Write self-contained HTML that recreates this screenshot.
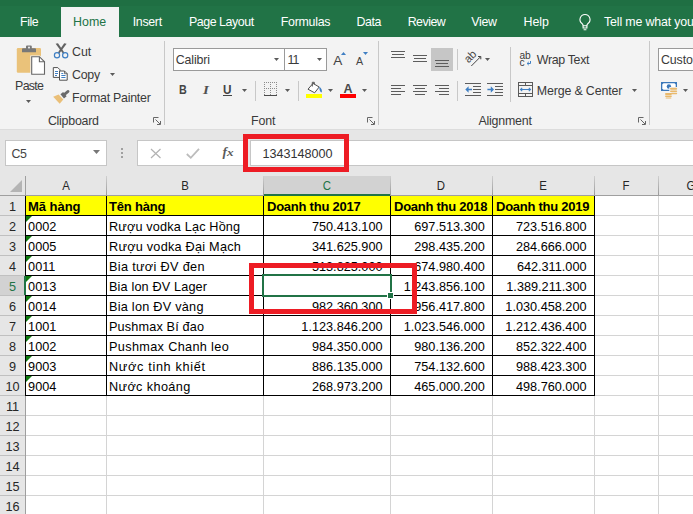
<!DOCTYPE html>
<html lang="vi"><head><meta charset="utf-8"><title>Excel</title>
<style>
html,body{margin:0;padding:0}
body{width:693px;height:514px;overflow:hidden;position:relative;background:#fff;font-family:"Liberation Sans",sans-serif;color:#000}
.a{position:absolute;white-space:nowrap}
.t{position:absolute;white-space:nowrap;font-size:11.7px;line-height:14px;color:#3a3a3a}
.c{position:absolute;white-space:nowrap;font-size:12.7px;line-height:14px;color:#000}
.b{font-weight:bold}
svg{position:absolute;overflow:visible}
</style></head><body>

<div class="a" style="left:0;top:0;width:693px;height:37px;background:#217346"></div>
<div class="a" style="left:0;top:0;width:693px;height:6px;background:#1f6f43"></div>
<div class="a" style="left:61px;top:7px;width:58px;height:30px;background:#f3f3f3"></div>
<svg id="bulb" style="left:576.5px;top:13px" width="16" height="18" viewBox="0 0 16 18"><path d="M8 1.500a5 5 0 0 0-3 9c.7.600 1.100 1.500 1.100 2.200h3.800c0-.700.400-1.600 1.100-2.200a5 5 0 0 0-3-9z" fill="none" stroke="#fff" stroke-width="1.100"/><path d="M6.100 12.700v2.300h3.800v-2.300M6.600 16.800h2.800" stroke="#fff" stroke-width="1.100" fill="none"/></svg>
<div class="a" style="left:0;top:37px;width:693px;height:92px;background:#f3f3f3"></div>
<div class="a" style="left:0;top:129px;width:693px;height:47px;background:#e6e6e6"></div>
<div class="a" style="left:0;top:129px;width:693px;height:1px;background:#dcdcdc"></div>
<div class="a" style="left:164px;top:41px;width:1px;height:84px;background:#c8c8c8"></div>
<div class="a" style="left:378px;top:41px;width:1px;height:84px;background:#c8c8c8"></div>
<div class="a" style="left:649px;top:41px;width:1px;height:84px;background:#c8c8c8"></div>
<svg id="i-paste" style="left:16px;top:43px" width="31" height="34" viewBox="16 43 31 34">
<rect x="16.800" y="48" width="24.200" height="24.800" rx="1.200" fill="#eac27a"/>
<path d="M26 48.200v-1.700q0-1 1-1h3.800q1 0 1 1v1.700h3.200q1 0 1 1v3.100H22v-3.100q0-1 1-1z" fill="#787878"/>
<rect x="28.100" y="46.700" width="1.800" height="1.700" fill="#f3f3f3"/>
<path d="M30.300 55.400H40L46 61.400v14.200H30.300z" fill="#f3f3f3"/>
<path d="M31.700 56.700H39.400L44.500 61.800V74.200H31.700z" fill="#fff" stroke="#666" stroke-width="1.100" stroke-linejoin="miter"/>
<path d="M39.400 56.700V61.800H44.500" fill="none" stroke="#666" stroke-width="1.100"/>
</svg>
<svg style="left:26px;top:100px" width="5" height="3"><path d="M0 0h5L2.5 3z" fill="#5a5a5a"/></svg>
<svg id="i-cut" style="left:53px;top:43px" width="16" height="16" viewBox="53 43 16 16">
<path d="M55.600 43.800L58 43.300L64.300 52.400L62.900 53.500z" fill="#626262"/>
<path d="M66.600 43.800L64.200 43.300L57.900 52.400L59.300 53.500z" fill="#626262"/>
<circle cx="57" cy="55.300" r="2.600" fill="none" stroke="#3f7fc3" stroke-width="1.200"/>
<circle cx="65.200" cy="55.300" r="2.600" fill="none" stroke="#3f7fc3" stroke-width="1.200"/>
</svg>
<svg id="i-copy" style="left:52px;top:66px" width="17" height="16" viewBox="52 66 17 16">
<path d="M53.300 67.600H57.800L60 69.800V77.400H53.300z" fill="#fff" stroke="#505050" stroke-width="1"/>
<path d="M55 71.500h3M55 73.500h3M55 75.500h2" stroke="#3f7fc3" stroke-width="1" fill="none"/>
<path d="M59.500 71H64.500L67.200 73.700V80.200H59.500z" fill="#fff" stroke="#505050" stroke-width="1"/>
<path d="M64.500 71V73.700H67.200" fill="none" stroke="#505050" stroke-width="0.800"/>
<path d="M61.300 75.500h4.200M61.300 77.500h4.200M61.300 73.500h2" stroke="#3f7fc3" stroke-width="1" fill="none"/>
</svg>
<svg style="left:110px;top:73px" width="5" height="3"><path d="M0 0h5L2.5 3z" fill="#5a5a5a"/></svg>
<svg id="i-fp" style="left:53px;top:90px" width="17" height="15" viewBox="53 90 17 15">
<path d="M53.200 96.700L58.600 94.400L63.300 99.400L59.700 103.700z" fill="#eabf78"/>
<path d="M64.900 94.100L62.200 96.400" stroke="#6a6a6a" stroke-width="5.400" fill="none"/>
<path d="M68.100 91.400L64.500 94.400" stroke="#6a6a6a" stroke-width="2.700" fill="none" stroke-linecap="round"/>
</svg>
<svg style="left:153px;top:117px" width="8" height="8" viewBox="0 0 8 8"><path d="M0.5 5.500V0.500H5.500" fill="none" stroke="#666" stroke-width="1"/><path d="M2.500 2.500L7 7M7.500 4V7.500H4" fill="none" stroke="#666" stroke-width="1"/></svg>
<div class="a" style="left:173px;top:48px;width:110px;height:21px;background:#fff;border:1px solid #9a9a9a"></div>
<div class="a" style="left:284px;top:48px;width:41px;height:21px;background:#fff;border:1px solid #9a9a9a"></div>
<svg style="left:274px;top:58px" width="5" height="3"><path d="M0 0h5L2.5 3z" fill="#5a5a5a"/></svg>
<svg style="left:317px;top:58px" width="5" height="3"><path d="M0 0h5L2.5 3z" fill="#5a5a5a"/></svg>
<div class="t" id="growA" style="left:333.3px;top:54.2px;font-size:13.6px;line-height:14px;color:#444">A</div>
<svg style="left:341px;top:52px" width="5" height="3"><path d="M0 3h5L2.500 0z" fill="#3f7fc3"/></svg>
<div class="t" id="shrinkA" style="left:356px;top:55px;font-size:10.7px;line-height:12px;color:#444">A</div>
<svg style="left:363px;top:52px" width="5" height="3"><path d="M0 0h5L2.500 3z" fill="#3f7fc3"/></svg>
<div class="t" id="bB" style="left:179.3px;top:83px;font-size:12.5px;font-weight:bold;color:#444;transform:scaleX(.86);transform-origin:0 0">B</div>
<div class="t" id="bI" style="left:203px;top:82.7px;font-size:12.5px;font-style:italic;font-family:'Liberation Serif',serif;font-weight:bold;color:#505050;transform:scaleX(1.2);transform-origin:0 0">I</div>
<div class="t" id="bU" style="left:222.8px;top:83px;font-size:12.5px;font-weight:bold;color:#444;transform:scaleX(.94);transform-origin:0 0">U</div>
<div class="a" style="left:222.5px;top:95px;width:9.5px;height:1px;background:#444"></div>
<svg style="left:242px;top:89px" width="5" height="3"><path d="M0 0h5L2.5 3z" fill="#5a5a5a"/></svg>
<div class="a" style="left:255px;top:81px;width:1px;height:20px;background:#c8c8c8"></div>
<svg id="i-bord" style="left:264px;top:82px" width="13" height="14" viewBox="0 0 13 14"><g fill="#8c8c8c"><rect x="0" y="0" width="1" height="1"/><rect x="0" y="2" width="1" height="1"/><rect x="0" y="4" width="1" height="1"/><rect x="0" y="6" width="1" height="1"/><rect x="0" y="8" width="1" height="1"/><rect x="0" y="10" width="1" height="1"/><rect x="0" y="12" width="1" height="1"/><rect x="2" y="0" width="1" height="1"/><rect x="2" y="6" width="1" height="1"/><rect x="4" y="0" width="1" height="1"/><rect x="4" y="6" width="1" height="1"/><rect x="6" y="0" width="1" height="1"/><rect x="6" y="2" width="1" height="1"/><rect x="6" y="4" width="1" height="1"/><rect x="6" y="6" width="1" height="1"/><rect x="6" y="8" width="1" height="1"/><rect x="6" y="10" width="1" height="1"/><rect x="6" y="12" width="1" height="1"/><rect x="8" y="0" width="1" height="1"/><rect x="8" y="6" width="1" height="1"/><rect x="10" y="0" width="1" height="1"/><rect x="10" y="6" width="1" height="1"/><rect x="12" y="0" width="1" height="1"/><rect x="12" y="2" width="1" height="1"/><rect x="12" y="4" width="1" height="1"/><rect x="12" y="6" width="1" height="1"/><rect x="12" y="8" width="1" height="1"/><rect x="12" y="10" width="1" height="1"/><rect x="12" y="12" width="1" height="1"/></g><rect x="0" y="13" width="13" height="1" fill="#4a4a4a"/></svg>
<svg style="left:285px;top:89px" width="5" height="3"><path d="M0 0h5L2.5 3z" fill="#5a5a5a"/></svg>
<div class="a" style="left:298px;top:81px;width:1px;height:20px;background:#c8c8c8"></div>
<svg id="i-fill" style="left:306px;top:81px" width="17" height="17" viewBox="306 81 17 17">
<path d="M313 83.400L308 89.200L314.600 92.800L319.200 87z" fill="#fff" stroke="#505050" stroke-width="1"/>
<path d="M312.300 86.500V82.300H314.300V84.300" fill="none" stroke="#505050" stroke-width="1"/>
<path d="M319.300 86.400q3.400 3 2.400 6.200q-2.400 -1 -2.400 -6.200z" fill="#3f7fc3"/>
<rect x="306" y="94" width="16" height="4" fill="#ffff00"/></svg>
<svg style="left:328px;top:89px" width="5" height="3"><path d="M0 0h5L2.5 3z" fill="#5a5a5a"/></svg>
<div class="t" id="fcA" style="left:343.4px;top:82.2px;font-size:12.5px;line-height:14px;font-weight:bold;color:#4a4a4a">A</div>
<div class="a" style="left:340px;top:94px;width:16px;height:4px;background:#ff0000"></div>
<svg style="left:362px;top:89px" width="5" height="3"><path d="M0 0h5L2.5 3z" fill="#5a5a5a"/></svg>
<svg style="left:367px;top:117px" width="8" height="8" viewBox="0 0 8 8"><path d="M0.5 5.500V0.500H5.500" fill="none" stroke="#666" stroke-width="1"/><path d="M2.500 2.500L7 7M7.500 4V7.500H4" fill="none" stroke="#666" stroke-width="1"/></svg>
<div class="a" style="left:391px;top:51px;width:14px;height:1px;background:#5c5c5c"></div><div class="a" style="left:391px;top:57px;width:14px;height:1px;background:#5c5c5c"></div><div class="a" style="left:392px;top:54px;width:12px;height:1px;background:#5c5c5c"></div>
<div class="a" style="left:413px;top:55px;width:14px;height:1px;background:#5c5c5c"></div><div class="a" style="left:413px;top:61px;width:14px;height:1px;background:#5c5c5c"></div><div class="a" style="left:414px;top:58px;width:12px;height:1px;background:#5c5c5c"></div>
<div class="a" style="left:431px;top:48px;width:22px;height:23px;background:#c6c6c6"></div>
<div class="a" style="left:435px;top:60px;width:14px;height:1px;background:#5c5c5c"></div><div class="a" style="left:435px;top:66px;width:14px;height:1px;background:#5c5c5c"></div><div class="a" style="left:436px;top:63px;width:12px;height:1px;background:#5c5c5c"></div>
<div class="a" style="left:457px;top:49px;width:1px;height:21px;background:#c8c8c8"></div>
<svg id="i-orient" style="left:464px;top:50px" width="19" height="18" viewBox="464 50 19 18">
<text x="0" y="0" transform="translate(468.400 63.600) rotate(-45)" font-family="Liberation Sans, sans-serif" font-size="11.200" fill="#444">ab</text>
<path d="M471.300 66L480.400 56.900M480.800 56.500h-2.800M480.800 56.500v2.800" fill="none" stroke="#444" stroke-width="1"/></svg>
<svg style="left:485px;top:58px" width="5" height="3"><path d="M0 0h5L2.5 3z" fill="#5a5a5a"/></svg>
<div class="a" style="left:391px;top:85px;width:14px;height:1px;background:#5c5c5c"></div>
<div class="a" style="left:413px;top:85px;width:14px;height:1px;background:#5c5c5c"></div>
<div class="a" style="left:435px;top:85px;width:14px;height:1px;background:#5c5c5c"></div>
<div class="a" style="left:391px;top:88px;width:10px;height:1px;background:#5c5c5c"></div>
<div class="a" style="left:415px;top:88px;width:10px;height:1px;background:#5c5c5c"></div>
<div class="a" style="left:439px;top:88px;width:10px;height:1px;background:#5c5c5c"></div>
<div class="a" style="left:391px;top:91px;width:14px;height:1px;background:#5c5c5c"></div>
<div class="a" style="left:413px;top:91px;width:14px;height:1px;background:#5c5c5c"></div>
<div class="a" style="left:435px;top:91px;width:14px;height:1px;background:#5c5c5c"></div>
<div class="a" style="left:391px;top:94px;width:10px;height:1px;background:#5c5c5c"></div>
<div class="a" style="left:415px;top:94px;width:10px;height:1px;background:#5c5c5c"></div>
<div class="a" style="left:439px;top:94px;width:10px;height:1px;background:#5c5c5c"></div>
<div class="a" style="left:457px;top:81px;width:1px;height:20px;background:#c8c8c8"></div>
<svg style="left:465px;top:83px" width="16" height="13" viewBox="0 0 16 13"><path d="M0 0.500h16M8 3.500h8M8 6.500h8M8 9.500h8M0 12.500h16" stroke="#5c5c5c" stroke-width="1" fill="none"/><path d="M7 5.700H3.600V3.200L0.300 6.500L3.600 9.800V7.300H7z" fill="#3f7fc3"/></svg>
<svg style="left:487px;top:83px" width="16" height="13" viewBox="0 0 16 13"><path d="M0 0.500h16M8 3.500h8M8 6.500h8M8 9.500h8M0 12.500h16" stroke="#5c5c5c" stroke-width="1" fill="none"/><path d="M0.400 5.700h3.400V3.200L7 6.500L3.800 9.800V7.300H0.400z" fill="#3f7fc3"/></svg>
<div class="a" style="left:510px;top:47px;width:1px;height:55px;background:#c8c8c8"></div>
<svg id="i-wrap" style="left:519px;top:50px" width="14" height="18" viewBox="519 50 14 18">
<text x="519.600" y="58.700" font-family="Liberation Sans, sans-serif" font-size="10.200" fill="#3a3a3a" letter-spacing="-0.300">ab</text>
<text x="519.600" y="65.800" font-family="Liberation Sans, sans-serif" font-size="10.200" fill="#3a3a3a">c</text>
<path d="M530.500 61v2.500h-3.200M528.800 61.900L527.100 63.500l1.700 1.600" fill="none" stroke="#3f7fc3" stroke-width="1"/></svg>
<svg id="i-merge" style="left:518px;top:82px" width="15" height="15" viewBox="0 0 15 15">
<rect x="0.500" y="0.500" width="14" height="14" fill="none" stroke="#5a5a5a" stroke-width="1"/>
<path d="M0.500 3.500h14M0.500 11.500h14M7.500 0.500v3M7.500 11.500v3" stroke="#5a5a5a" stroke-width="1" fill="none"/>
<path d="M2.500 7.500h10M4.200 5.800L2.500 7.500l1.700 1.700M10.800 5.800L12.500 7.500l-1.700 1.700" stroke="#3f7fc3" stroke-width="1.100" fill="none"/></svg>
<svg style="left:632px;top:89px" width="5" height="3"><path d="M0 0h5L2.5 3z" fill="#5a5a5a"/></svg>
<svg style="left:638px;top:117px" width="8" height="8" viewBox="0 0 8 8"><path d="M0.5 5.500V0.500H5.500" fill="none" stroke="#666" stroke-width="1"/><path d="M2.500 2.500L7 7M7.500 4V7.500H4" fill="none" stroke="#666" stroke-width="1"/></svg>
<div class="a" style="left:658px;top:48px;width:60px;height:21px;background:#fff;border:1px solid #9a9a9a"></div>
<svg id="i-cur" style="left:660px;top:81px" width="18" height="18" viewBox="660 81 18 18">
<rect x="661" y="82" width="16" height="9" fill="#3b78ba"/>
<path d="M663.500 83.300h11l1.200 1.200v4l-1.200 1.200h-11l-1.200 -1.200v-4z" fill="#fff"/>
<circle cx="668.900" cy="86.500" r="2.200" fill="#3b78ba"/>
<rect x="669.300" y="87" width="8.700" height="4.600" fill="#f3f3f3"/>
<g fill="#e9b96c"><rect x="670" y="87.800" width="7.200" height="2" rx="1"/><rect x="670" y="90.400" width="7.200" height="1.700" rx="0.800"/><rect x="671" y="92.700" width="6.200" height="1.500" rx="0.700"/>
<rect x="665" y="93" width="6.900" height="2" rx="1"/><rect x="665" y="95.500" width="6.900" height="1.600" rx="0.800"/><rect x="665.600" y="97.500" width="5.800" height="1" rx="0.500"/></g></svg>
<svg style="left:683px;top:89px" width="5" height="3"><path d="M0 0h5L2.5 3z" fill="#5a5a5a"/></svg>
<div class="a" style="left:5px;top:140px;width:100px;height:24px;background:#fff;border:1px solid #c6c6c6"></div>
<svg style="left:93px;top:150px" width="7" height="4"><path d="M0 0h7L3.500 4z" fill="#777"/></svg>
<div class="a" style="left:121px;top:148px;width:2px;height:2px;background:#a0a0a0"></div>
<div class="a" style="left:121px;top:152px;width:2px;height:2px;background:#a0a0a0"></div>
<div class="a" style="left:121px;top:156px;width:2px;height:2px;background:#a0a0a0"></div>
<div class="a" style="left:137px;top:140px;width:109px;height:24px;background:#fff;border:1px solid #c6c6c6"></div>
<div class="a" style="left:250px;top:140px;width:460px;height:24px;background:#fff;border:1px solid #c6c6c6"></div>
<svg style="left:150px;top:148px" width="12" height="11" viewBox="0 0 12 11"><path d="M1 1l9.500 9M10.500 1L1 10" stroke="#b2b2b2" stroke-width="1.200" fill="none"/></svg>
<svg style="left:186px;top:148px" width="14" height="11" viewBox="0 0 14 11"><path d="M0.800 6L4.800 9.800L13 0.800" stroke="#bcbcbc" stroke-width="1.800" fill="none"/></svg>
<div class="a" id="fx" style="left:222.6px;top:142.6px;font-family:'Liberation Serif',serif;font-style:italic;font-weight:bold;font-size:13.5px;line-height:18px;color:#5a5a5a">f<span style="font-size:10.5px;margin-left:0.2px;display:inline-block;transform:scaleX(1.250);transform-origin:0 50%;position:relative;top:0.8px">x</span></div>
<div class="t" id="tab-file" style="left:20.1px;top:14.7px;font-size:12.4px;letter-spacing:-0.49px;color:#fff">File</div>
<div class="t" id="tab-home" style="left:73.1px;top:14.7px;font-size:12.4px;letter-spacing:0.01px;color:#217346">Home</div>
<div class="t" id="tab-insert" style="left:132.7px;top:14.7px;font-size:12.4px;letter-spacing:-0.32px;color:#fff">Insert</div>
<div class="t" id="tab-page" style="left:188.9px;top:14.7px;font-size:12.4px;letter-spacing:-0.43px;color:#fff">Page Layout</div>
<div class="t" id="tab-form" style="left:280.8px;top:14.7px;font-size:12.4px;letter-spacing:-0.28px;color:#fff">Formulas</div>
<div class="t" id="tab-data" style="left:356.6px;top:14.7px;font-size:12.4px;letter-spacing:-0.45px;color:#fff">Data</div>
<div class="t" id="tab-review" style="left:407.7px;top:14.7px;font-size:12.4px;letter-spacing:-0.52px;color:#fff">Review</div>
<div class="t" id="tab-view" style="left:471.2px;top:14.7px;font-size:12.4px;letter-spacing:-0.29px;color:#fff">View</div>
<div class="t" id="tab-help" style="left:523.6px;top:14.7px;font-size:12.4px;letter-spacing:-0.07px;color:#fff">Help</div>
<div class="t" id="tab-tell" style="left:604.1px;top:14.7px;font-size:12.4px;letter-spacing:-0.17px;color:#fff">Tell me what you want to do</div>
<div class="t" id="l-paste" style="left:15.1px;top:78.7px;font-size:12.4px;letter-spacing:-0.72px">Paste</div>
<div class="t" id="l-cut" style="left:72.1px;top:44.7px;font-size:12.4px;letter-spacing:-0.07px">Cut</div>
<div class="t" id="l-copy" style="left:72.1px;top:67.9px;font-size:12.4px;letter-spacing:-0.28px">Copy</div>
<div class="t" id="l-fp" style="left:72.1px;top:90.7px;font-size:12.4px;letter-spacing:-0.25px">Format Painter</div>
<div class="t" id="l-clip" style="left:47.9px;top:113.7px;font-size:12.4px;letter-spacing:-0.25px">Clipboard</div>
<div class="t" id="l-cal" style="left:175.8px;top:52.7px;font-size:12.4px;letter-spacing:-0.15px">Calibri</div>
<div class="t" id="l-11" style="left:287.4px;top:52.7px;font-size:12.4px;letter-spacing:-0.84px">11</div>
<div class="t" id="l-font" style="left:251.1px;top:113.7px;font-size:12.4px;letter-spacing:-0.17px">Font</div>
<div class="t" id="l-wrap" style="left:536.8px;top:52.7px;font-size:12.4px;letter-spacing:-0.33px">Wrap Text</div>
<div class="t" id="l-merge" style="left:536.8px;top:83.7px;font-size:12.4px;letter-spacing:-0.15px">Merge &amp; Center</div>
<div class="t" id="l-align" style="left:478.4px;top:113.7px;font-size:12.4px;letter-spacing:-0.19px">Alignment</div>
<div class="t" id="l-custom" style="left:660.9px;top:52.7px;font-size:12.4px;letter-spacing:-0.08px">Custom</div>
<div class="t" id="l-c5" style="left:11.4px;top:146.7px;font-size:12.4px;letter-spacing:-0.27px;color:#444">C5</div>
<div class="c" style="left:262.5px;top:147.1px;font-size:12.6px;color:#333">1343148000</div>
<div class="a" style="left:243px;top:134px;width:96px;height:28px;border:5px solid #ed1c24"></div>
<div class="a" style="left:0;top:176px;width:693px;height:19px;background:#e6e6e6"></div>
<div class="a" style="left:0;top:195px;width:25px;height:320px;background:#e6e6e6"></div>
<div class="a" style="left:264px;top:176px;width:126px;height:18px;background:#d2d2d2"></div>
<div class="a" style="left:0;top:276px;width:24px;height:19px;background:#d2d2d2"></div>
<div class="a" style="left:0;top:195px;width:693px;height:1px;background:#9f9f9f"></div>
<div class="a" style="left:25px;top:176px;width:1px;height:340px;background:#9f9f9f"></div>
<div class="a" style="left:106px;top:176px;width:1px;height:19px;background:linear-gradient(#cfcfcf,#9a9a9a)"></div>
<div class="a" style="left:263px;top:176px;width:1px;height:19px;background:linear-gradient(#cfcfcf,#9a9a9a)"></div>
<div class="a" style="left:390px;top:176px;width:1px;height:19px;background:linear-gradient(#cfcfcf,#9a9a9a)"></div>
<div class="a" style="left:492px;top:176px;width:1px;height:19px;background:linear-gradient(#cfcfcf,#9a9a9a)"></div>
<div class="a" style="left:594px;top:176px;width:1px;height:19px;background:linear-gradient(#cfcfcf,#9a9a9a)"></div>
<div class="a" style="left:658px;top:176px;width:1px;height:19px;background:linear-gradient(#cfcfcf,#9a9a9a)"></div>
<div class="a" style="left:26px;top:215px;width:667px;height:1px;background:#d4d4d4"></div>
<div class="a" style="left:0;top:215px;width:25px;height:1px;background:#c0c0c0"></div>
<div class="a" style="left:26px;top:235px;width:667px;height:1px;background:#d4d4d4"></div>
<div class="a" style="left:0;top:235px;width:25px;height:1px;background:#c0c0c0"></div>
<div class="a" style="left:26px;top:255px;width:667px;height:1px;background:#d4d4d4"></div>
<div class="a" style="left:0;top:255px;width:25px;height:1px;background:#c0c0c0"></div>
<div class="a" style="left:26px;top:275px;width:667px;height:1px;background:#d4d4d4"></div>
<div class="a" style="left:0;top:275px;width:25px;height:1px;background:#c0c0c0"></div>
<div class="a" style="left:26px;top:295px;width:667px;height:1px;background:#d4d4d4"></div>
<div class="a" style="left:0;top:295px;width:25px;height:1px;background:#c0c0c0"></div>
<div class="a" style="left:26px;top:315px;width:667px;height:1px;background:#d4d4d4"></div>
<div class="a" style="left:0;top:315px;width:25px;height:1px;background:#c0c0c0"></div>
<div class="a" style="left:26px;top:335px;width:667px;height:1px;background:#d4d4d4"></div>
<div class="a" style="left:0;top:335px;width:25px;height:1px;background:#c0c0c0"></div>
<div class="a" style="left:26px;top:355px;width:667px;height:1px;background:#d4d4d4"></div>
<div class="a" style="left:0;top:355px;width:25px;height:1px;background:#c0c0c0"></div>
<div class="a" style="left:26px;top:375px;width:667px;height:1px;background:#d4d4d4"></div>
<div class="a" style="left:0;top:375px;width:25px;height:1px;background:#c0c0c0"></div>
<div class="a" style="left:26px;top:395px;width:667px;height:1px;background:#d4d4d4"></div>
<div class="a" style="left:0;top:395px;width:25px;height:1px;background:#c0c0c0"></div>
<div class="a" style="left:26px;top:415px;width:667px;height:1px;background:#d4d4d4"></div>
<div class="a" style="left:0;top:415px;width:25px;height:1px;background:#c0c0c0"></div>
<div class="a" style="left:26px;top:435px;width:667px;height:1px;background:#d4d4d4"></div>
<div class="a" style="left:0;top:435px;width:25px;height:1px;background:#c0c0c0"></div>
<div class="a" style="left:26px;top:455px;width:667px;height:1px;background:#d4d4d4"></div>
<div class="a" style="left:0;top:455px;width:25px;height:1px;background:#c0c0c0"></div>
<div class="a" style="left:26px;top:475px;width:667px;height:1px;background:#d4d4d4"></div>
<div class="a" style="left:0;top:475px;width:25px;height:1px;background:#c0c0c0"></div>
<div class="a" style="left:26px;top:495px;width:667px;height:1px;background:#d4d4d4"></div>
<div class="a" style="left:0;top:495px;width:25px;height:1px;background:#c0c0c0"></div>
<div class="a" style="left:26px;top:515px;width:667px;height:1px;background:#d4d4d4"></div>
<div class="a" style="left:0;top:515px;width:25px;height:1px;background:#c0c0c0"></div>
<div class="a" style="left:106px;top:196px;width:1px;height:320px;background:#d4d4d4"></div>
<div class="a" style="left:263px;top:196px;width:1px;height:320px;background:#d4d4d4"></div>
<div class="a" style="left:390px;top:196px;width:1px;height:320px;background:#d4d4d4"></div>
<div class="a" style="left:492px;top:196px;width:1px;height:320px;background:#d4d4d4"></div>
<div class="a" style="left:594px;top:196px;width:1px;height:320px;background:#d4d4d4"></div>
<div class="a" style="left:658px;top:196px;width:1px;height:320px;background:#d4d4d4"></div>
<div class="a" style="left:26px;top:196px;width:568px;height:19px;background:#ffff00"></div>
<div class="a" style="left:25px;top:215px;width:570px;height:1px;background:#000"></div>
<div class="a" style="left:25px;top:235px;width:570px;height:1px;background:#000"></div>
<div class="a" style="left:25px;top:255px;width:570px;height:1px;background:#000"></div>
<div class="a" style="left:25px;top:275px;width:570px;height:1px;background:#000"></div>
<div class="a" style="left:25px;top:295px;width:570px;height:1px;background:#000"></div>
<div class="a" style="left:25px;top:315px;width:570px;height:1px;background:#000"></div>
<div class="a" style="left:25px;top:335px;width:570px;height:1px;background:#000"></div>
<div class="a" style="left:25px;top:355px;width:570px;height:1px;background:#000"></div>
<div class="a" style="left:25px;top:375px;width:570px;height:1px;background:#000"></div>
<div class="a" style="left:25px;top:395px;width:570px;height:1px;background:#000"></div>
<div class="a" style="left:106px;top:196px;width:1px;height:200px;background:#000"></div>
<div class="a" style="left:263px;top:196px;width:1px;height:200px;background:#000"></div>
<div class="a" style="left:390px;top:196px;width:1px;height:200px;background:#000"></div>
<div class="a" style="left:492px;top:196px;width:1px;height:200px;background:#000"></div>
<div class="a" style="left:594px;top:196px;width:1px;height:200px;background:#000"></div>
<div class="a" style="left:25px;top:196px;width:1px;height:200px;background:#000"></div>
<div class="a" style="left:264px;top:194px;width:126px;height:2px;background:#217346"></div>
<div class="a" style="left:24px;top:276px;width:2px;height:19px;background:#217346"></div>
<svg style="left:10px;top:180px" width="12" height="12"><path d="M12 0v12H0z" fill="#b4b4b4"/></svg>
<div class="c" style="left:45.5px;width:40px;text-align:center;top:178.9px;color:#262626;transform:scaleX(.9)">A</div>
<div class="c" style="left:164.5px;width:40px;text-align:center;top:178.9px;color:#262626;transform:scaleX(.9)">B</div>
<div class="c" style="left:306.5px;width:40px;text-align:center;top:178.9px;color:#217346;transform:scaleX(.9)">C</div>
<div class="c" style="left:421px;width:40px;text-align:center;top:178.9px;color:#262626;transform:scaleX(.9)">D</div>
<div class="c" style="left:523px;width:40px;text-align:center;top:178.9px;color:#262626;transform:scaleX(.9)">E</div>
<div class="c" style="left:606px;width:40px;text-align:center;top:178.9px;color:#262626;transform:scaleX(.9)">F</div>
<div class="c" style="left:670.5px;width:40px;text-align:center;top:178.9px;color:#262626;transform:scaleX(.9)">G</div>
<div class="c" style="left:0;width:25px;text-align:center;top:199.8px;color:#262626">1</div>
<div class="c" style="left:0;width:25px;text-align:center;top:219.8px;color:#262626">2</div>
<div class="c" style="left:0;width:25px;text-align:center;top:239.8px;color:#262626">3</div>
<div class="c" style="left:0;width:25px;text-align:center;top:259.8px;color:#262626">4</div>
<div class="c" style="left:0;width:25px;text-align:center;top:279.8px;color:#217346">5</div>
<div class="c" style="left:0;width:25px;text-align:center;top:299.8px;color:#262626">6</div>
<div class="c" style="left:0;width:25px;text-align:center;top:319.8px;color:#262626">7</div>
<div class="c" style="left:0;width:25px;text-align:center;top:339.8px;color:#262626">8</div>
<div class="c" style="left:0;width:25px;text-align:center;top:359.8px;color:#262626">9</div>
<div class="c" style="left:0;width:25px;text-align:center;top:379.8px;color:#262626">10</div>
<div class="c" style="left:0;width:25px;text-align:center;top:399.8px;color:#262626">11</div>
<div class="c" style="left:0;width:25px;text-align:center;top:419.8px;color:#262626">12</div>
<div class="c" style="left:0;width:25px;text-align:center;top:439.8px;color:#262626">13</div>
<div class="c" style="left:0;width:25px;text-align:center;top:459.8px;color:#262626">14</div>
<div class="c" style="left:0;width:25px;text-align:center;top:479.8px;color:#262626">15</div>
<div class="c" style="left:0;width:25px;text-align:center;top:499.8px;color:#262626">16</div>
<div class="c b" style="left:28.1px;top:199.8px;font-size:13px;letter-spacing:-0.05px;margin-top:-0.2px">Mã hàng</div>
<div class="c b" style="left:109px;top:199.8px;font-size:13px;letter-spacing:-0.19px;margin-top:-0.2px">Tên hàng</div>
<div class="c b" style="left:267px;top:199.8px;font-size:13px;letter-spacing:-0.24px;margin-top:-0.2px">Doanh thu 2017</div>
<div class="c b" style="left:394px;top:199.8px;font-size:13px;letter-spacing:-0.26px;margin-top:-0.2px">Doanh thu 2018</div>
<div class="c b" style="left:496px;top:199.8px;font-size:13px;letter-spacing:-0.26px;margin-top:-0.2px">Doanh thu 2019</div>
<div class="c" style="left:28.1px;top:219.8px">0002</div>
<div class="c" style="left:109px;top:219.8px;letter-spacing:0.16px">Rượu vodka Lạc Hồng</div>
<div class="c" style="right:310.5px;top:219.8px">750.413.100</div>
<div class="c" style="right:208.2px;top:219.8px">697.513.300</div>
<div class="c" style="right:106.5px;top:219.8px">723.516.800</div>
<svg style="left:26px;top:216px" width="6" height="6"><path d="M0 0h6L0 6z" fill="#0f7b0f"/></svg>
<div class="c" style="left:28.1px;top:239.8px">0005</div>
<div class="c" style="left:109px;top:239.8px;letter-spacing:0.24px">Rượu vodka Đại Mạch</div>
<div class="c" style="right:310.5px;top:239.8px">341.625.900</div>
<div class="c" style="right:208.2px;top:239.8px">298.435.200</div>
<div class="c" style="right:106.5px;top:239.8px">284.666.000</div>
<svg style="left:26px;top:236px" width="6" height="6"><path d="M0 0h6L0 6z" fill="#0f7b0f"/></svg>
<div class="c" style="left:28.1px;top:259.8px">0011</div>
<div class="c" style="left:109px;top:259.8px;letter-spacing:0.33px">Bia tươi ĐV đen</div>
<div class="c" style="right:310.5px;top:259.8px">513.825.000</div>
<div class="c" style="right:208.2px;top:259.8px">674.980.400</div>
<div class="c" style="right:106.5px;top:259.8px">642.311.000</div>
<svg style="left:26px;top:256px" width="6" height="6"><path d="M0 0h6L0 6z" fill="#0f7b0f"/></svg>
<div class="c" style="left:28.1px;top:279.8px">0013</div>
<div class="c" style="left:109px;top:279.8px;letter-spacing:0.14px">Bia lon ĐV Lager</div>
<div class="c" style="right:208.2px;top:279.8px">1.243.856.100</div>
<div class="c" style="right:106.5px;top:279.8px">1.389.211.300</div>
<svg style="left:26px;top:276px" width="6" height="6"><path d="M0 0h6L0 6z" fill="#0f7b0f"/></svg>
<div class="c" style="left:28.1px;top:299.8px">0014</div>
<div class="c" style="left:109px;top:299.8px;letter-spacing:0.25px">Bia lon ĐV vàng</div>
<div class="c" style="right:310.5px;top:299.8px">982.360.300</div>
<div class="c" style="right:208.2px;top:299.8px">956.417.800</div>
<div class="c" style="right:106.5px;top:299.8px">1.030.458.200</div>
<svg style="left:26px;top:296px" width="6" height="6"><path d="M0 0h6L0 6z" fill="#0f7b0f"/></svg>
<div class="c" style="left:28.1px;top:319.8px">1001</div>
<div class="c" style="left:109px;top:319.8px;letter-spacing:0.15px">Pushmax Bí đao</div>
<div class="c" style="right:310.5px;top:319.8px">1.123.846.200</div>
<div class="c" style="right:208.2px;top:319.8px">1.023.546.000</div>
<div class="c" style="right:106.5px;top:319.8px">1.212.436.400</div>
<svg style="left:26px;top:316px" width="6" height="6"><path d="M0 0h6L0 6z" fill="#0f7b0f"/></svg>
<div class="c" style="left:28.1px;top:339.8px">1002</div>
<div class="c" style="left:109px;top:339.8px;letter-spacing:0.34px">Pushmax Chanh leo</div>
<div class="c" style="right:310.5px;top:339.8px">984.350.000</div>
<div class="c" style="right:208.2px;top:339.8px">980.136.200</div>
<div class="c" style="right:106.5px;top:339.8px">852.322.400</div>
<svg style="left:26px;top:336px" width="6" height="6"><path d="M0 0h6L0 6z" fill="#0f7b0f"/></svg>
<div class="c" style="left:28.1px;top:359.8px">9003</div>
<div class="c" style="left:109px;top:359.8px;letter-spacing:0.67px">Nước tinh khiết</div>
<div class="c" style="right:310.5px;top:359.8px">886.135.000</div>
<div class="c" style="right:208.2px;top:359.8px">754.132.600</div>
<div class="c" style="right:106.5px;top:359.8px">988.423.300</div>
<svg style="left:26px;top:356px" width="6" height="6"><path d="M0 0h6L0 6z" fill="#0f7b0f"/></svg>
<div class="c" style="left:28.1px;top:379.8px">9004</div>
<div class="c" style="left:109px;top:379.8px;letter-spacing:0.38px">Nước khoáng</div>
<div class="c" style="right:310.5px;top:379.8px">268.973.200</div>
<div class="c" style="right:208.2px;top:379.8px">465.000.200</div>
<div class="c" style="right:106.5px;top:379.8px">498.760.000</div>
<svg style="left:26px;top:376px" width="6" height="6"><path d="M0 0h6L0 6z" fill="#0f7b0f"/></svg>
<div class="a" style="left:262px;top:274px;width:126px;height:19px;border:2px solid #217346"></div>
<div class="a" style="left:387px;top:292px;width:5px;height:5px;background:#217346;border:1px solid #fff"></div>
<div class="a" style="left:249px;top:263px;width:158px;height:41px;border:5px solid #ed1c24"></div>
</body></html>
